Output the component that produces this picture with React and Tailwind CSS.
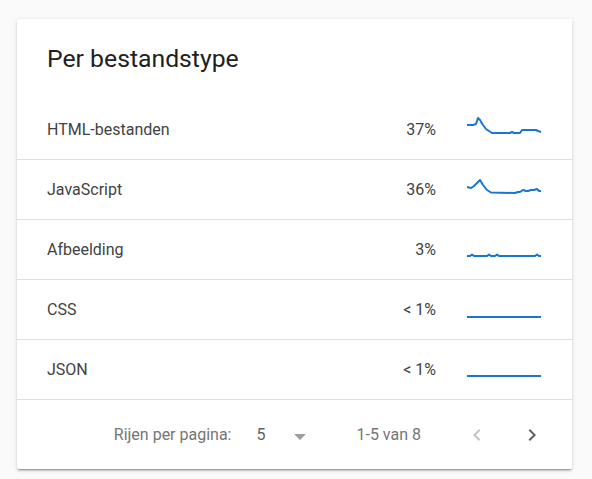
const rows = [
  {
    name: "HTML-bestanden",
    pct: "37%",
    points:
      "1,10 7,10 10,9 12,3 14,5 17,10 20,14 23,16 26,18 44,18 46,17 48,18 54,18 56,15 70,15 72,16 75,17",
  },
  {
    name: "JavaScript",
    pct: "36%",
    points:
      "1,12 5,13 8,11 14,5 17,10 21,15 25,17.5 49,18 52,17 54,17 57,15 60,16 62,16 65,15 68,15 71,14 73,16 75,16",
  },
  {
    name: "Afbeelding",
    pct: "3%",
    points:
      "1,21 4,21 6,19.5 8,21 21,21 23,19.5 25,21 29,21 31,19.5 33,21 69,21 71,19.5 73,21 75,21",
  },
  { name: "CSS", pct: "< 1%", points: "1,22 75,22" },
  { name: "JSON", pct: "< 1%", points: "1,21 75,21" },
];

function Sparkline({ points }) {
  return (
    <svg width="76" height="30" viewBox="0 0 76 30" className="ml-[30px] shrink-0">
      <polyline
        points={points}
        fill="none"
        stroke="#1976d2"
        strokeWidth="2"
        strokeLinejoin="round"
        strokeLinecap="butt"
      />
    </svg>
  );
}

export default function App() {
  return (
    <div className="min-h-screen bg-[#fafafa] pl-[17px] pt-[19px] font-['Roboto',sans-serif]">
      <div className="w-[555px] rounded-[2px] bg-white shadow-[0_3px_1px_-2px_rgba(0,0,0,0.2),0_2px_2px_0_rgba(0,0,0,0.14),0_1px_5px_0_rgba(0,0,0,0.12)]">
        <div className="px-[30px] pt-6 pb-[25px]">
          <h2 className="text-[24.75px] leading-8 font-normal text-[#212121]">Per bestandstype</h2>
        </div>

        {rows.map((r) => (
          <div
            key={r.name}
            className="flex h-[60px] items-center border-b border-[#e0e0e0] px-[30px] text-[16px] text-[#424242]"
          >
            <span className="flex-1">{r.name}</span>
            <span className="text-right">{r.pct}</span>
            <Sparkline points={r.points} />
          </div>
        ))}

        {/* Footer */}
        <div className="flex h-[69px] items-center justify-end pr-4 text-[16px] text-[#757575]">
          <span>Rijen per pagina:</span>
          <span className="ml-[25px] text-[#616161]">5</span>
          <svg width="12" height="6" viewBox="0 0 12 6" className="ml-[29px] mt-[4px]">
            <polygon points="0,0 12,0 6,6" fill="#9e9e9e" />
          </svg>
          <span className="ml-[50px]">1-5 van 8</span>
          <button className="ml-8 flex h-12 w-12 items-center justify-center">
            <svg width="24" height="24" viewBox="0 0 24 24" fill="#c4c4c4">
              <path d="M15.41 7.41L14 6l-6 6 6 6 1.41-1.41L10.83 12z" />
            </svg>
          </button>
          <button className="ml-[7px] flex h-12 w-12 items-center justify-center">
            <svg width="24" height="24" viewBox="0 0 24 24" fill="#616161">
              <path d="M10 6L8.59 7.41 13.17 12l-4.58 4.59L10 18l6-6z" />
            </svg>
          </button>
        </div>
      </div>
    </div>
  );
}
